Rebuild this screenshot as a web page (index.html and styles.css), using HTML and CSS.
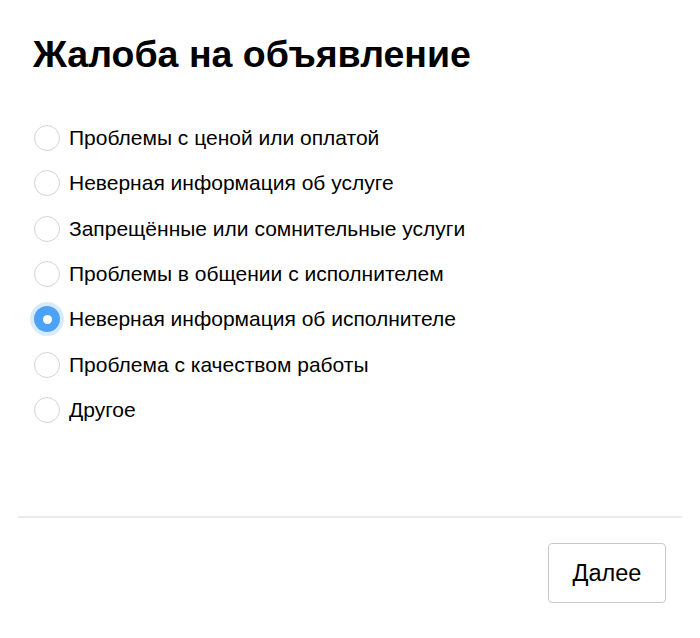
FILE: index.html
```html
<!DOCTYPE html>
<html lang="ru">
<head>
<meta charset="utf-8">
<title>Жалоба на объявление</title>
<link rel="stylesheet" href="styles.css">
</head>
<body>
<div class="modal">
  <div class="content">
    <h1 class="title">Жалоба на объявление</h1>
    <div class="options">
      <label class="option"><span class="radio"></span><span class="label">Проблемы с ценой или оплатой</span></label>
      <label class="option"><span class="radio"></span><span class="label">Неверная информация об услуге</span></label>
      <label class="option"><span class="radio"></span><span class="label">Запрещённые или сомнительные услуги</span></label>
      <label class="option"><span class="radio"></span><span class="label">Проблемы в общении с исполнителем</span></label>
      <label class="option"><span class="radio checked"></span><span class="label">Неверная информация об исполнителе</span></label>
      <label class="option"><span class="radio"></span><span class="label">Проблема с качеством работы</span></label>
      <label class="option"><span class="radio"></span><span class="label">Другое</span></label>
    </div>
  </div>
  <div class="footer">
    <button class="next">Далее</button>
  </div>
</div>
</body>
</html>
```
FILE: styles.css
```css
* { box-sizing: border-box; }
html, body {
  margin: 0;
  padding: 0;
  background: #fff;
}
body {
  font-family: "Liberation Sans", Arial, sans-serif;
  color: #000;
}
.modal {
  padding: 0 18px;
}
.content {
  padding: 35px 15px 0 15px;
  height: 516px;
}
.title {
  margin: 0;
  font-size: 37.5px;
  line-height: 38px;
  font-weight: bold;
}
.options {
  margin-top: 52px;
  display: flex;
  flex-direction: column;
  gap: 19.33px;
}
.option {
  display: flex;
  align-items: center;
  height: 26px;
}
.radio {
  width: 26px;
  height: 26px;
  border-radius: 50%;
  border: 1.5px solid #d4d4d4;
  background: #fff;
  flex: none;
  margin-left: 1px;
  display: flex;
  align-items: center;
  justify-content: center;
}
.radio.checked {
  border: none;
  background: #4ca2f7;
  box-shadow: 0 0 0 4px rgba(76, 162, 247, 0.22);
}
.radio.checked::after {
  content: "";
  width: 9px;
  height: 9px;
  border-radius: 50%;
  background: #fff;
}
.label {
  margin-left: 9px;
  font-size: 21px;
  line-height: 24px;
}
.footer {
  border-top: 2px solid #ebebeb;
  display: flex;
  justify-content: flex-end;
  padding: 25px 16px 35px 0;
}
.next {
  width: 118px;
  height: 60px;
  background: #fff;
  border: 1px solid #c9c9c9;
  border-radius: 4px;
  font-family: "Liberation Sans", Arial, sans-serif;
  font-size: 23.5px;
  color: #000;
  padding: 0;
}
```
